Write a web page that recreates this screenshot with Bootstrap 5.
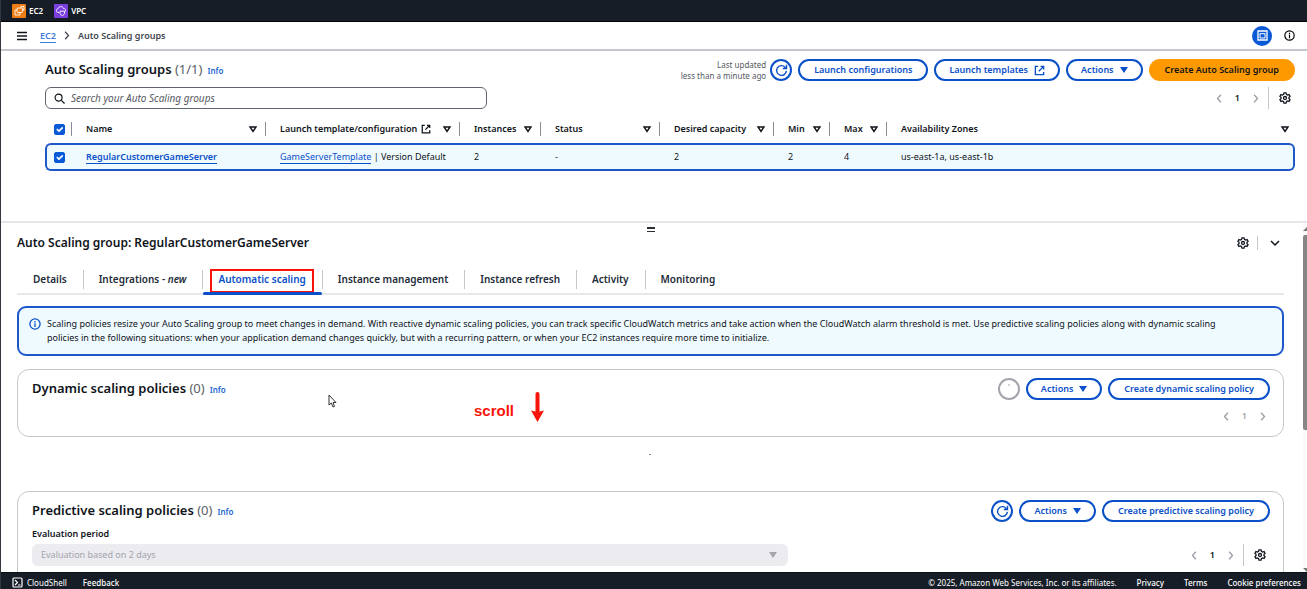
<!DOCTYPE html>
<html lang="en">
<head>
<meta charset="utf-8">
<meta name="viewport" content="width=device-width, initial-scale=1">
<title>Auto Scaling groups | EC2</title>
<link href="https://cdn.jsdelivr.net/npm/bootstrap@5.3.0/dist/css/bootstrap.min.css" rel="stylesheet">
<style>
:root{--blue:#0a50c8;--ink:#0f141a;--dark:#161d27}
body{font-family:"Noto Sans","Open Sans",sans-serif;font-size:9px;line-height:14px;color:var(--ink);border-left:1px solid #34373d}
svg{flex:none;display:block;fill:none;stroke:currentColor;stroke-width:1.7}
a{color:var(--blue)}
button{font:inherit}
.fw-sb{font-weight:600}
.top-bar{background:var(--dark);height:22px;border-bottom:1px solid #000;padding-left:11px;gap:11px}
.top-bar a,.foot-bar a{color:#fff;text-decoration:none}
.top-bar a{gap:3px;font-size:8px;font-weight:600}
.crumb-bar{height:29px;border-bottom:2px solid #c6c6cd;padding:0 12px 0 16px}
.plain-btn{border:0;background:none;padding:0;color:inherit;display:flex;align-items:center}
.crumb-bar .breadcrumb{font-size:9px;font-weight:600;color:#424650;margin-left:13px}
.crumb-bar a{text-decoration:none;border-bottom:1px solid;color:#3f7ddc}
.panel-toggle{width:20px;height:20px;border-radius:50%;background:#0a5ad8;color:#fff;justify-content:center}
.groups{padding:8px 12px 0 44px;height:170px}
.title{font-size:13px;line-height:20px;font-weight:600;margin:0}
.title span{font-weight:400;color:#5a5d66}
.info{font-size:8px;font-weight:600;text-decoration:none;margin-left:5px;color:#1a66d0}
.updated{font-size:8px;line-height:11px;color:#555962;text-align:right}
.pill-set,.box-set{gap:6px}
.pill-set{margin-left:6px}
.pill{border:2px solid var(--blue);border-radius:12px;height:22px;padding:0 14px;line-height:18px;font-weight:600;color:var(--blue);background:#fff;display:flex;align-items:center;gap:6px}
.pill-menu{padding:0 13px}
.pill-icon{width:22px;padding:0;justify-content:center}
.pill-orange{background:#f90;border-color:#f90;color:var(--ink)}
.pill-off{border-color:#a4a4ad;color:#a4a4ad}
.caret{width:8px;height:6px;fill:currentColor;stroke:none}
.search-row{margin-top:6px}
.search{width:442px;height:22px;border:1px solid #60646e;border-radius:6px;padding:0 8px;gap:6px}
.search input{border:0;outline:0;padding:0;font-size:10px;font-style:italic;flex:1;min-width:0}
.search input::placeholder{color:#555962;opacity:1}
.pager{gap:13px;height:22px;color:#9a9ca5}
.pager .num{color:var(--ink);font-weight:600}
.pager.off{margin-top:5px}
.pager.off .num{color:#a4a4ad}
.gear-set{gap:10px;height:22px;margin-left:9px}
.rule-v{width:1px;background:#c6c6cd;align-self:stretch}
.grid-tbl{table-layout:fixed;width:100%;border-collapse:separate;border-spacing:0;margin-top:6px}
.grid-tbl th,.grid-tbl td{padding:0 0 0 14px;white-space:nowrap;height:28px;vertical-align:middle}
.grid-tbl th{font-weight:600;padding-right:9px}
.grid-tbl th:last-child{padding-right:6px}
.grid-tbl th.sep{background:linear-gradient(#8c8c94,#8c8c94) right center/1px 14px no-repeat}
.grid-tbl th:first-child{padding:0 0 0 9px}
.grid-tbl td:first-child{padding:0 0 0 7px}
.grid-tbl td{background:#effaff;border:solid #1d57c9;border-width:2px 0}
.grid-tbl td:first-child{border-left-width:2px;border-radius:6px 0 0 6px}
.grid-tbl td:last-child{border-right-width:2px;border-radius:0 6px 6px 0}
.grid-tbl a{text-decoration:none;border-bottom:1px solid}
.form-check-input.tick{width:11px;height:11px;margin:0;border-radius:2px;display:block}
.form-check-input.tick:checked{background-color:#0a5ad8;border-color:#0a5ad8;background-size:11px}
.split{border-top:2px solid #e6e6ea;min-height:0}
.split-main{padding:0 19px 0 16px;overflow:hidden}
.grip{width:8px;height:5px;padding:0;border:solid #2a2e35;border-width:2px 0 1px;background:none;margin:4px auto 0}
.split-title{font-size:12px;line-height:22px;font-weight:600;margin:0}
.tab-row{border-bottom:2px solid #e8e8ec;height:30px;margin-top:11px;flex-wrap:nowrap}
.tab-row .nav-item{display:flex;position:relative;height:30px;padding-bottom:2px}
.tab-row .nav-item+.nav-item{background:linear-gradient(#c6c6cd,#c6c6cd) left 5px/1px 19px no-repeat}
.tab-row .nav-link{font-size:10px;line-height:28px;padding:0 16px;font-weight:600;color:#232b37}
.tab-row .nav-link.active{color:var(--blue)}
.tab-row .nav-item.on::after{content:"";position:absolute;left:1px;right:0;bottom:0;height:3px;background:var(--blue);border-radius:2px}
.mark-box{position:absolute;inset:4px 8px 2px;border:2px solid #f81408;pointer-events:none}
.notice{border:2px solid #1d57c9;border-radius:9px;background:#effaff;padding:9px 64px 9px 10px;gap:6px;margin-top:11px}
.notice svg{margin-top:1px;color:var(--blue)}
.box{border:1px solid #c6c6cd;border-radius:12px;padding:8px 13px 0 14px}
.box-dyn{margin-top:13px;height:68px}
.box-pred{margin-top:54px;height:120px}
.eval-label{margin:5px 0 3px}
.sel-wrap{position:relative}
.sel{width:756px;height:22px;border:0;border-radius:6px;background-color:#ebebf0;color:#a4a4ad;padding:0 9px;appearance:none;opacity:1;display:block}
.sel-wrap svg{position:absolute;right:11px;top:8px;color:#a4a4ad}
.note{position:absolute;left:456px;top:21px;color:#f81408;font:600 15px/20px "Liberation Sans",sans-serif;gap:17px}
.note span{padding-top:10px}
.cursor{position:absolute;left:310px;top:24px}
.dot-mark{position:absolute;left:631px;top:84px;width:2px;height:1px;background:#888}
.rail{width:4px;background:#fafafa}
.rail i{display:block;background:#858585;border-radius:2px 0 0 2px;height:56%;margin-top:4px}
.rail svg{fill:#777;stroke:none}
.foot-bar{background:var(--dark);height:17px;padding:3px 6px 0 11px;color:#fff;font-size:8px;border-top:1px solid #0c1118}
.foot-bar a{font-weight:500}
.foot-gap{margin-left:20px}
</style>
</head>
<body class="d-flex flex-column vh-100 overflow-hidden">
<svg width="0" height="0" class="position-absolute" aria-hidden="true">
<symbol id="i-refresh" viewBox="0 0 16 16"><path d="M14 8.500a6 6 0 1 1-1.600-4.600L14 5.500M14.200 1v4.600H9.600"/></symbol>
<symbol id="i-ext" viewBox="0 0 16 16"><path d="M6 2H2v12h12v-4M9.500 2H14v4.500M14 2 7 9" stroke-width="2"/></symbol>
<symbol id="i-gear" viewBox="0 0 16 16"><path d="M6.600 1.200h2.800l.5 2 1.500.8 2-.6 1.400 2.400-1.500 1.400v1.600l1.500 1.400-1.400 2.400-2-.6-1.500.8-.5 2H6.600l-.5-2-1.500-.8-2 .6-1.400-2.400 1.500-1.400V7.200L1.200 5.800l1.400-2.400 2 .6 1.500-.8z"/><circle cx="8" cy="8" r="2"/></symbol>
<symbol id="i-left" viewBox="0 0 8 12"><path d="M6.500 1 2 6l4.500 5"/></symbol>
<symbol id="i-right" viewBox="0 0 8 12"><path d="M1.500 1 6 6l-4.500 5"/></symbol>
<symbol id="i-info" viewBox="0 0 16 16"><circle cx="8" cy="8" r="6.800"/><path d="M8 7v5M8 4v2"/></symbol>
<symbol id="i-caret" viewBox="0 0 8 6"><path d="M0 0h8L4 6z"/></symbol>
<symbol id="i-sort" viewBox="0 0 8 7"><path d="M1 1h6L4 5.500z" stroke-width="1.500"/></symbol>
</svg>

<nav class="top-bar d-flex align-items-center flex-shrink-0">
<a href="#" class="d-flex align-items-center"><svg width="14" height="14" viewBox="0 0 14 14"><rect width="14" height="14" rx="1" fill="#ed7d14" stroke="none"/><g stroke="#fff" stroke-width=".9"><rect x="5" y="4" width="5.500" height="4.500" rx="1"/><path d="M5 6H3v5h5V8.500M9 4V2.500h3V6h-1.500"/></g></svg>EC2</a>
<a href="#" class="d-flex align-items-center"><svg width="14" height="14" viewBox="0 0 14 14"><rect width="14" height="14" rx="1" fill="#7b3fe0" stroke="none"/><g stroke="#fff" stroke-width=".9"><path d="M5 8.500H3.800a2 2 0 0 1 0-3.800C5 2 9 2 9.500 4.500c2 0 2.500 1.500 2 3"/><path d="M6 7.200h4.500v2c0 1.200-1 1.800-2.200 2.500C7 11 6 10.500 6 9.200z"/></g></svg>VPC</a>
</nav>

<header class="crumb-bar d-flex align-items-center flex-shrink-0">
<button class="plain-btn" aria-label="Menu"><svg width="10" height="10" viewBox="0 0 10 10"><path d="M0 1.500h10M0 5h10M0 8.500h10" stroke-width="1.500"/></svg></button>
<ol class="breadcrumb d-flex align-items-center mb-0 flex-grow-1 gap-2">
<li><a href="#">EC2</a></li>
<li><svg width="6" height="9" viewBox="0 0 8 12"><use href="#i-right"/></svg></li>
<li>Auto Scaling groups</li>
</ol>
<button class="plain-btn panel-toggle" aria-label="Split panel"><svg width="11" height="11" viewBox="0 0 11 11"><path d="M1 1h9v9H1z" stroke-width="1.300"/><path d="M3 3.700h5M3 3.500v4.500h5V3.500" stroke-width="1"/></svg></button>
<button class="plain-btn ms-2 ps-1 text-black" aria-label="Help"><svg width="11" height="11"><use href="#i-info"/></svg></button>
</header>

<section class="groups flex-shrink-0">
<div class="d-flex align-items-center">
<h1 class="title me-auto">Auto Scaling groups <span>(1/1)</span><a href="#" class="info">Info</a></h1>
<div class="d-flex align-items-center gap-1">
<div class="updated">Last updated<br>less than a minute ago</div>
<button class="pill pill-icon" aria-label="Refresh"><svg width="13" height="13"><use href="#i-refresh"/></svg></button>
</div>
<div class="d-flex pill-set">
<button class="pill">Launch configurations</button>
<button class="pill pill-menu">Launch templates <svg width="11" height="11"><use href="#i-ext"/></svg></button>
<button class="pill pill-menu">Actions <svg class="caret"><use href="#i-caret"/></svg></button>
<button class="pill pill-orange">Create Auto Scaling group</button>
</div>
</div>
<div class="search-row d-flex align-items-center">
<label class="search d-flex align-items-center me-auto"><svg width="11" height="11" viewBox="0 0 12 12"><circle cx="5" cy="5" r="3.800" stroke-width="1.300"/><path d="m8 8 3.500 3.500" stroke-width="1.300"/></svg><input type="search" placeholder="Search your Auto Scaling groups" aria-label="Search your Auto Scaling groups"></label>
<div class="pager d-flex align-items-center">
<button class="plain-btn" aria-label="Previous"><svg width="6" height="9"><use href="#i-left"/></svg></button>
<span class="num">1</span>
<button class="plain-btn" aria-label="Next"><svg width="6" height="9"><use href="#i-right"/></svg></button>
</div>
<div class="d-flex align-items-center gear-set pe-1"><span class="rule-v"></span><button class="plain-btn" aria-label="Preferences"><svg width="12" height="12"><use href="#i-gear"/></svg></button></div>
</div>
<table class="grid-tbl">
<colgroup><col style="width:27px"><col style="width:194px"><col style="width:194px"><col style="width:81px"><col style="width:119px"><col style="width:114px"><col style="width:56px"><col style="width:57px"><col></colgroup>
<thead><tr>
<th class="sep"><input class="form-check-input tick" type="checkbox" checked aria-label="Select all"></th>
<th class="sep"><div class="d-flex align-items-center justify-content-between">Name<svg width="8" height="7"><use href="#i-sort"/></svg></div></th>
<th class="sep"><div class="d-flex align-items-center justify-content-between"><span class="d-flex align-items-center gap-1">Launch template/configuration<svg width="10" height="10"><use href="#i-ext"/></svg></span><svg width="8" height="7"><use href="#i-sort"/></svg></div></th>
<th class="sep"><div class="d-flex align-items-center justify-content-between">Instances<svg width="8" height="7"><use href="#i-sort"/></svg></div></th>
<th class="sep"><div class="d-flex align-items-center justify-content-between">Status<svg width="8" height="7"><use href="#i-sort"/></svg></div></th>
<th class="sep"><div class="d-flex align-items-center justify-content-between">Desired capacity<svg width="8" height="7"><use href="#i-sort"/></svg></div></th>
<th class="sep"><div class="d-flex align-items-center justify-content-between">Min<svg width="8" height="7"><use href="#i-sort"/></svg></div></th>
<th class="sep"><div class="d-flex align-items-center justify-content-between">Max<svg width="8" height="7"><use href="#i-sort"/></svg></div></th>
<th><div class="d-flex align-items-center justify-content-between">Availability Zones<svg width="8" height="7"><use href="#i-sort"/></svg></div></th>
</tr></thead>
<tbody><tr>
<td><input class="form-check-input tick" type="checkbox" checked aria-label="Select RegularCustomerGameServer"></td>
<td><a href="#" class="fw-sb">RegularCustomerGameServer</a></td>
<td><a href="#">GameServerTemplate</a> | Version Default</td>
<td>2</td><td>-</td><td>2</td><td>2</td><td>4</td><td>us-east-1a, us-east-1b</td>
</tr></tbody>
</table>
</section>

<div class="split d-flex flex-grow-1">
<main class="split-main flex-grow-1">
<button class="grip d-block" aria-label="Resize panel"></button>
<div class="d-flex align-items-center">
<h2 class="split-title me-auto">Auto Scaling group: RegularCustomerGameServer</h2>
<button class="plain-btn" aria-label="Panel preferences"><svg width="12" height="12"><use href="#i-gear"/></svg></button>
<span class="rule-v mx-2 my-1"></span>
<button class="plain-btn px-1" aria-label="Close panel"><svg width="10" height="7" viewBox="0 0 10 7"><path d="m1 1 4 4 4-4" stroke-width="1.500"/></svg></button>
</div>
<ul class="nav tab-row">
<li class="nav-item"><a class="nav-link" href="#">Details</a></li>
<li class="nav-item"><a class="nav-link" href="#">Integrations - <em>new</em></a></li>
<li class="nav-item on"><a class="nav-link active" href="#">Automatic scaling</a><span class="mark-box"></span></li>
<li class="nav-item"><a class="nav-link" href="#">Instance management</a></li>
<li class="nav-item"><a class="nav-link" href="#">Instance refresh</a></li>
<li class="nav-item"><a class="nav-link" href="#">Activity</a></li>
<li class="nav-item"><a class="nav-link" href="#">Monitoring</a></li>
</ul>
<div class="notice d-flex">
<svg width="12" height="12"><use href="#i-info"/></svg>
<div>Scaling policies resize your Auto Scaling group to meet changes in demand. With reactive dynamic scaling policies, you can track specific CloudWatch metrics and take action when the CloudWatch alarm threshold is met. Use predictive scaling policies along with dynamic scaling policies in the following situations: when your application demand changes quickly, but with a recurring pattern, or when your EC2 instances require more time to initialize.</div>
</div>
<section class="box box-dyn position-relative">
<div class="d-flex align-items-center">
<h3 class="title me-auto">Dynamic scaling policies <span>(0)</span><a href="#" class="info">Info</a></h3>
<div class="d-flex box-set">
<button class="pill pill-icon pill-off" aria-label="Loading"><svg width="14" height="14" viewBox="0 0 14 14"><path d="M6 3h2" stroke-width="1"/></svg></button>
<button class="pill pill-menu">Actions <svg class="caret"><use href="#i-caret"/></svg></button>
<button class="pill">Create dynamic scaling policy</button>
</div>
</div>
<div class="pager off d-flex align-items-center justify-content-end pe-1">
<button class="plain-btn" aria-label="Previous"><svg width="6" height="9"><use href="#i-left"/></svg></button>
<span class="num">1</span>
<button class="plain-btn" aria-label="Next"><svg width="6" height="9"><use href="#i-right"/></svg></button>
</div>
<div class="note d-flex"><span>scroll</span><svg width="13" height="32" viewBox="0 0 13 32"><path d="M6.500 3v20" stroke-width="4" stroke-linecap="round"/><path d="M0 19.500 6.500 21l6.500-1.500L6.500 31z" fill="currentColor" stroke="none"/></svg></div>
<svg class="cursor" width="9" height="14" viewBox="0 0 9 14"><path d="M1 1v10l2.300-2 1.700 4 1.500-.7L5 8.500h3z" fill="#fff" stroke="#333" stroke-width="1"/></svg>
<span class="dot-mark"></span>
</section>
<section class="box box-pred">
<div class="d-flex align-items-center">
<h3 class="title me-auto">Predictive scaling policies <span>(0)</span><a href="#" class="info">Info</a></h3>
<div class="d-flex box-set">
<button class="pill pill-icon" aria-label="Refresh"><svg width="13" height="13"><use href="#i-refresh"/></svg></button>
<button class="pill pill-menu">Actions <svg class="caret"><use href="#i-caret"/></svg></button>
<button class="pill">Create predictive scaling policy</button>
</div>
</div>
<div class="d-flex align-items-end">
<div class="me-auto">
<label class="fw-sb d-block eval-label" for="period">Evaluation period</label>
<div class="sel-wrap"><select id="period" class="sel" disabled><option>Evaluation based on 2 days</option></select><svg class="caret"><use href="#i-caret"/></svg></div>
</div>
<div class="pager d-flex align-items-center">
<button class="plain-btn" aria-label="Previous"><svg width="6" height="9"><use href="#i-left"/></svg></button>
<span class="num">1</span>
<button class="plain-btn" aria-label="Next"><svg width="6" height="9"><use href="#i-right"/></svg></button>
</div>
<div class="d-flex align-items-center gear-set pe-1"><span class="rule-v"></span><button class="plain-btn" aria-label="Preferences"><svg width="12" height="12"><use href="#i-gear"/></svg></button></div>
</div>
</section>
</main>
<div class="rail d-flex flex-column flex-shrink-0"><svg width="4" height="4" class="mt-1" viewBox="0 0 4 4"><path d="M0 4 4 0v4z"/></svg><i></i><svg width="4" height="4" class="mt-auto" viewBox="0 0 4 4"><path d="M0 0h4v4z"/></svg></div>
</div>

<footer class="foot-bar d-flex align-items-center flex-shrink-0">
<button class="plain-btn gap-1"><svg width="11" height="11" viewBox="0 0 11 11"><rect x="1" y="1" width="9" height="9" rx="1" stroke-width="1.200"/><path d="m3 3 2.500 2.500L3 8M6 8h2.500" stroke-width="1.200"/></svg>CloudShell</button>
<a href="#" class="ms-3 me-auto">Feedback</a>
<span>© 2025, Amazon Web Services, Inc. or its affiliates.</span>
<a href="#" class="foot-gap">Privacy</a><a href="#" class="foot-gap">Terms</a><a href="#" class="foot-gap">Cookie preferences</a>
</footer>
<script src="https://cdn.jsdelivr.net/npm/bootstrap@5.3.0/dist/js/bootstrap.bundle.min.js"></script>
</body>
</html>
